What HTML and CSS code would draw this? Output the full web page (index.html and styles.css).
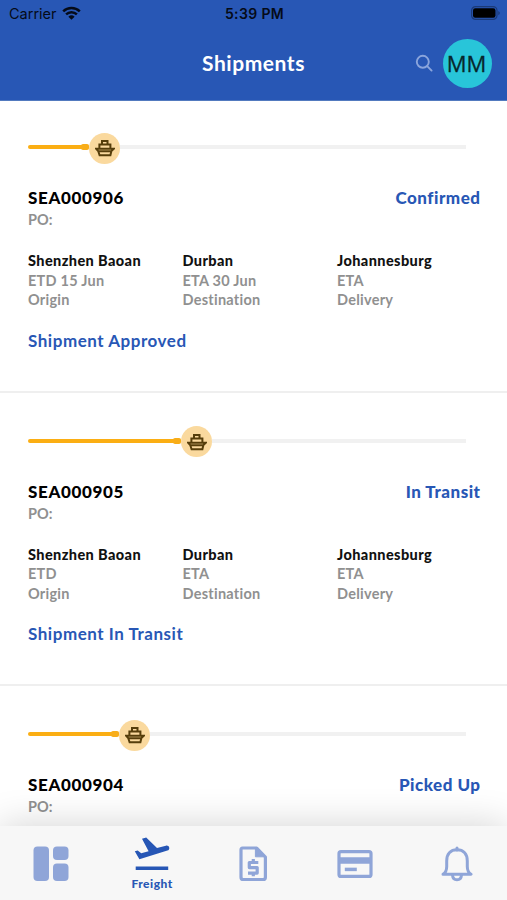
FILE: index.html
```html
<!DOCTYPE html>
<html lang="en">
<head>
    <meta charset="UTF-8">
    <title>Shipments</title>
    <meta name="viewport" content="width=device-width">
    <link rel="stylesheet" href="styles.css">
</head>
<body>
    <svg class="defs" width="0" height="0">
        <symbol id="ship" viewBox="0 0 20 18">
            <path d="M7 5V2h5.5v3M4.4 9.3V5.6h11v3.7M1 9.7h17.8l-2.4 2.3-1 4.2H4.6L3.2 12zM4 12.3h12" fill="none" stroke="#563e0b" stroke-width="2"/>
        </symbol>
    </svg>
    <header class="header">
        <div class="status">
            <div class="carrier">
                <span>Carrier</span>
                <svg width="19" height="14" viewBox="0 0 19 14" fill="none" stroke="#050b18" stroke-width="2.5">
                    <path d="M1.2 5.3a12 12 0 0 1 16.6 0M4.1 8.4a7.8 7.8 0 0 1 10.8 0"/>
                    <path d="M9.5 13.7 6.4 10.7a4.5 4.5 0 0 1 6.2 0z" fill="#050b18" stroke="none"/>
                </svg>
            </div>
            <div class="time">5:39 PM</div>
            <svg class="battery" width="29" height="14" viewBox="0 0 29 14">
                <rect x=".6" y=".6" width="25.4" height="12.8" rx="4" fill="none" stroke="#1b3a78" stroke-width="1.2"/>
                <rect x="2" y="2.2" width="22.5" height="9.6" rx="2.2" fill="#000"/>
                <path d="M27.3 5v4.2q1.5-.8 1.5-2.1T27.3 5z" fill="#1b3a78"/>
            </svg>
        </div>
        <div class="nav">
            <h1>Shipments</h1>
            <div class="actions">
                <svg width="18" height="18" viewBox="0 0 18 18" fill="none" stroke="#8ba5dc" stroke-width="1.9" stroke-linecap="round">
                    <circle cx="7.8" cy="7.8" r="6"/>
                    <path d="m12.2 12.2 4.4 4.4"/>
                </svg>
                <div class="avatar">MM</div>
            </div>
        </div>
    </header>

    <main class="list">
        <section class="shipment">
            <div class="progress">
                <div class="done" style="width: 61px"></div>
                <div class="marker"><svg width="20" height="18"><use href="#ship"/></svg></div>
                <div class="rest"></div>
            </div>
            <div class="title">
                <h2>SEA000906</h2>
                <span class="state">Confirmed</span>
            </div>
            <p class="po">PO:</p>
            <div class="route">
                <div><b>Shenzhen Baoan</b><p>ETD 15 Jun</p><p>Origin</p></div>
                <div><b>Durban</b><p>ETA 30 Jun</p><p>Destination</p></div>
                <div><b>Johannesburg</b><p>ETA</p><p>Delivery</p></div>
            </div>
            <p class="event">Shipment Approved</p>
        </section>

        <section class="shipment">
            <div class="progress">
                <div class="done" style="width: 153px"></div>
                <div class="marker"><svg width="20" height="18"><use href="#ship"/></svg></div>
                <div class="rest"></div>
            </div>
            <div class="title">
                <h2>SEA000905</h2>
                <span class="state">In Transit</span>
            </div>
            <p class="po">PO:</p>
            <div class="route">
                <div><b>Shenzhen Baoan</b><p>ETD</p><p>Origin</p></div>
                <div><b>Durban</b><p>ETA</p><p>Destination</p></div>
                <div><b>Johannesburg</b><p>ETA</p><p>Delivery</p></div>
            </div>
            <p class="event">Shipment In Transit</p>
        </section>

        <section class="shipment">
            <div class="progress">
                <div class="done" style="width: 91px"></div>
                <div class="marker"><svg width="20" height="18"><use href="#ship"/></svg></div>
                <div class="rest"></div>
            </div>
            <div class="title">
                <h2>SEA000904</h2>
                <span class="state">Picked Up</span>
            </div>
            <p class="po">PO:</p>
        </section>
    </main>

    <nav class="tabs">
        <a class="tab">
            <svg width="36" height="36" viewBox="0 0 36 36" fill="#8fa5d8">
                <rect x=".5" y=".5" width="15.5" height="34.5" rx="4"/>
                <rect x="20" y=".5" width="15.5" height="13.5" rx="4"/>
                <rect x="20" y="17.5" width="15.5" height="17.5" rx="4"/>
            </svg>
        </a>
        <a class="tab active">
            <svg width="36" height="34" viewBox="0 0 36 34" fill="#2656b5">
                <path d="M1.7 29.5h32.5v3.6H1.7zM8 1.7l4.2-1.1L23 11.1l8.9-2.4c1.5-.4 2.9.4 3.3 1.7.4 1.4-.4 2.7-1.8 3.1L5.4 22.2 .8 14.3l2.9-.8 3.5 2.8 7.4-2z"/>
            </svg>
            <span>Freight</span>
        </a>
        <a class="tab">
            <svg width="28" height="36" viewBox="0 0 28 36" fill="none" stroke="#8fa5d8" stroke-width="3.2" stroke-linejoin="round">
                <path d="M3.5 2h14.2l8.7 9v20.2q0 2.3-2.3 2.3H4.3Q2 33.5 2 31.2V3.9Q2 2 3.5 2z"/>
                <path d="M16.4 1.5v9.3h9.7z" fill="#8fa5d8" stroke-width="1"/>
                <path d="M19.3 16.5h-9v5.1h7.9v5.5H9M14.3 13v3.5m0 10.5v3.3" stroke-width="3.2"/>
            </svg>
        </a>
        <a class="tab">
            <svg width="36" height="28" viewBox="0 0 36 28" fill="none" stroke="#8fa5d8" stroke-width="3.2">
                <rect x="2" y="1.6" width="32" height="24.8" rx="2"/>
                <path d="M2 10.5h32" stroke-width="6.5"/>
                <path d="M7.8 19.4h12" stroke-width="3.5"/>
            </svg>
        </a>
        <a class="tab bell">
            <svg width="32" height="36" viewBox="0 0 32 36" fill="none" stroke="#8fa5d8" stroke-width="3" stroke-linejoin="round">
                <path d="M2 28.3Q5.7 26 5.7 20.5V15C5.7 8 9.5 3.8 16 3.8S26.3 8 26.3 15v5.5q0 5.5 3.7 7.8z"/>
                <path d="M11.5 29c.2 3 2 4.8 4.5 4.8s4.3-1.8 4.5-4.8M16 2v2" stroke-width="3" stroke-linecap="round"/>
            </svg>
        </a>
    </nav>
</body>
</html>
```

FILE: styles.css
```css
*{
    box-sizing: border-box;
}
body{
    margin: 0;
    height: 900px;
    display: flex;
    flex-direction: column;
    overflow: hidden;
    background-color: #fff;
    font-family: Lato, "Open Sans", sans-serif;
}
h1, h2, p{
    margin: 0;
}
.defs{
    position: absolute;
}
.header{
    flex: none;
    height: 101px;
    background-color: #2857b5;
    border-bottom: 1px solid #527abf;
}
.status{
    height: 28px;
    padding: 0 7px 0 9px;
    display: grid;
    grid-template-columns: 1fr auto 1fr;
    align-items: center;
    font: 14.5px/28px Inter, sans-serif;
    color: #050b18;
}
.carrier{
    display: flex;
    align-items: center;
    gap: 5px;
}
.carrier svg{
    margin-top: -3px;
}
.time{
    font-weight: 600;
    font-size: 14px;
    letter-spacing: .35px;
}
.battery{
    justify-self: end;
    margin-top: -2px;
}
.nav{
    height: 70px;
    padding: 0 15px;
    display: grid;
    grid-template-columns: 1fr auto 1fr;
    align-items: center;
}
.nav h1{
    grid-column: 2;
    margin-top: -2px;
    font-size: 21px;
    letter-spacing: .55px;
    color: #fff;
}
.actions{
    display: flex;
    justify-content: flex-end;
    align-items: center;
    gap: 10px;
}
.avatar{
    width: 49px;
    height: 49px;
    border-radius: 50%;
    background-color: #28c5d9;
    color: #07272b;
    font: 22px/49px "Open Sans", sans-serif;
    -webkit-text-stroke: .3px #07272b;
    padding-right: 2px;
    text-align: center;
}
.list{
    flex: 1;
    min-height: 0;
    overflow: hidden;
}
.shipment{
    height: 293.5px;
    padding: 34px 27px 0 28px;
    border-bottom: 2px solid #efefef;
}
.shipment:first-child{
    height: 291.5px;
    padding-top: 32px;
}
.progress{
    width: 438px;
    height: 30px;
    display: flex;
    align-items: center;
}
.done{
    height: 4px;
    margin-top: -2px;
    display: flex;
    align-items: center;
    justify-content: flex-end;
    background-color: #fbae13;
    border-radius: 2px;
}
.done::after{
    content: '';
    width: 8px;
    height: 6px;
    border-radius: 2px;
    background-color: #f8ad19;
}
.marker{
    width: 31px;
    height: 31px;
    border-radius: 50%;
    background-color: #fad99e;
    display: flex;
    align-items: center;
    justify-content: center;
}
.rest{
    flex: 1;
    height: 4px;
    margin-top: -2px;
    background-color: #f1f1f1;
}
.title{
    margin-top: 24px;
    display: flex;
    justify-content: space-between;
    line-height: 22px;
}
.title h2{
    font-size: 17px;
    font-weight: 900;
    letter-spacing: .65px;
}
.state{
    margin-right: -.5px;
    font-size: 17px;
    font-weight: 900;
    letter-spacing: .5px;
    color: #2857b5;
}
.po{
    padding-top: 1px;
    font-size: 14.5px;
    font-weight: bold;
    line-height: 20px;
    color: #909090;
}
.route{
    margin-top: 21px;
    display: grid;
    grid-template-columns: 154.5px 154.5px 1fr;
    font-size: 14.5px;
    font-weight: bold;
    line-height: 19.5px;
    letter-spacing: .25px;
    color: #909090;
}
.route b{
    display: block;
    font-weight: 900;
    letter-spacing: .4px;
    color: #111;
}
.event{
    margin-top: 20px;
    font-size: 17px;
    font-weight: bold;
    line-height: 22px;
    letter-spacing: .53px;
    color: #2857b5;
}
.tabs{
    flex: none;
    height: 74px;
    display: grid;
    grid-template-columns: repeat(5, 1fr);
    background-color: #f7f7f7;
    box-shadow: 0 0 38px rgba(0,0,0,.18);
}
.tab{
    display: flex;
    flex-direction: column;
    align-items: center;
    justify-content: center;
    padding-top: 1px;
}
.bell{
    padding-left: 2px;
}
.active{
    justify-content: flex-start;
    padding-top: 11px;
    font-size: 12px;
    font-weight: 900;
    line-height: 16px;
    letter-spacing: .5px;
    color: #2857b5;
}
.active span{
    margin-top: 5px;
}
```
